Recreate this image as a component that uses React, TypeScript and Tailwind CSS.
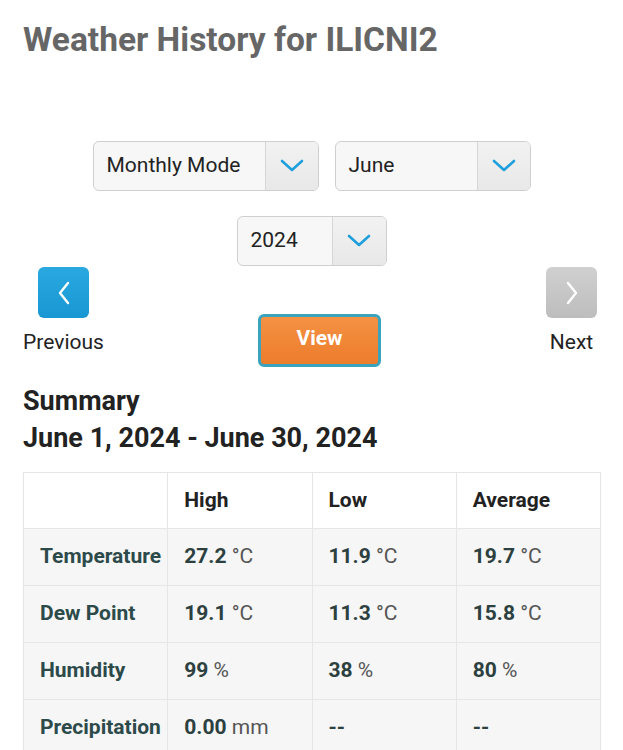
import React from "react";

function Chevron({ dir }: { dir: "down" | "left" | "right" }) {
  if (dir === "down")
    return (
      <svg width="24" height="14" viewBox="0 0 24 14" fill="none">
        <path d="M2 2 L12 11 L22 2" stroke="#1fa0dc" strokeWidth="2.6" strokeLinecap="round" strokeLinejoin="round" />
      </svg>
    );
  const d = dir === "left" ? "M11 2 L3 12 L11 22" : "M3 2 L11 12 L3 22";
  return (
    <svg width="14" height="24" viewBox="0 0 14 24" fill="none">
      <path d={d} stroke="#ffffff" strokeWidth="2.4" strokeLinecap="round" strokeLinejoin="round" />
    </svg>
  );
}

function Select({ label, w, arrowW }: { label: string; w: string; arrowW: string }) {
  return (
    <div className={`${w} h-[50px] flex rounded-[6px] border border-[#cfcfcf] bg-[#f7f7f7] overflow-hidden`}>
      <div className="flex-1 flex items-center pl-[13px] text-[21px] text-[#222]">{label}</div>
      <div className={`${arrowW} flex items-center justify-center border-l border-[#d6d6d6] bg-gradient-to-b from-[#f2f2f2] to-[#e8e8e8]`}>
        <Chevron dir="down" />
      </div>
    </div>
  );
}

const rows = [
  { label: "Temperature", v: [["27.2", "°C"], ["11.9", "°C"], ["19.7", "°C"]] },
  { label: "Dew Point", v: [["19.1", "°C"], ["11.3", "°C"], ["15.8", "°C"]] },
  { label: "Humidity", v: [["99", "%"], ["38", "%"], ["80", "%"]] },
  { label: "Precipitation", v: [["0.00", "mm"], ["--", ""], ["--", ""]] },
];

export default function App() {
  return (
    <div className="w-[623px] h-[750px] overflow-hidden bg-white font-['Roboto',sans-serif]">
      <div className="px-[23px] pt-[20px]">
        <h1 className="text-[33.5px] leading-[40px] font-bold text-[#666666]">Weather History for ILICNI2</h1>
      </div>
      <div className="mt-[81px] flex justify-center gap-[16px]">
        <Select label="Monthly Mode" w="w-[226px]" arrowW="w-[53px]" />
        <Select label="June" w="w-[196px]" arrowW="w-[53px]" />
      </div>
      <div className="mt-[25px] flex justify-center">
        <Select label="2024" w="w-[150px]" arrowW="w-[54px]" />
      </div>
      <div className="flex px-[23px] mt-[1px] h-[104px]">
        <div className="flex flex-col items-center w-[81px]">
          <div className="w-[51px] h-[51px] rounded-[6px] bg-gradient-to-b from-[#2aa8e0] to-[#1897d3] flex items-center justify-center">
            <Chevron dir="left" />
          </div>
          <div className="mt-[12px] text-[21px] leading-[24px] text-[#222]">Previous</div>
        </div>
        <div className="pt-[47px] ml-[154px]">
          <button className="w-[123px] h-[53px] rounded-[6px] border-[3px] border-[#3aa3bd] bg-gradient-to-b from-[#f59143] to-[#ec7d2b] text-white font-bold text-[21px] pb-[4px]">
            View
          </button>
        </div>
        <div className="flex flex-col items-center w-[51px] ml-auto mr-[3px]">
          <div className="w-[51px] h-[51px] rounded-[6px] bg-gradient-to-b from-[#d0d0d0] to-[#bdbdbd] flex items-center justify-center">
            <Chevron dir="right" />
          </div>
          <div className="mt-[12px] text-[21px] leading-[24px] text-[#222]">Next</div>
        </div>
      </div>
      <div className="px-[23px]">
        <div className="mt-[14px] text-[27px] leading-[32px] font-bold text-[#222]">Summary</div>
        <div className="mt-[5px] text-[27px] leading-[32px] font-bold text-[#222]">June 1, 2024 - June 30, 2024</div>
        <table className="mt-[18px] w-[578px] border-collapse table-fixed">
          <thead>
            <tr className="h-[56px] bg-white">
              <th className="border border-[#e6e6e6] w-1/4"></th>
              {["High", "Low", "Average"].map((h) => (
                <th key={h} className="border border-[#e6e6e6] text-left pl-[16px] text-[21px] font-bold text-[#222]">
                  {h}
                </th>
              ))}
            </tr>
          </thead>
          <tbody>
            {rows.map((r) => (
              <tr key={r.label} className="h-[57px] bg-[#f6f6f6]">
                <td className="border border-[#e6e6e6] pl-[16px] pr-0 text-[21px] font-bold text-[#2d4a4a] whitespace-nowrap">{r.label}</td>
                {r.v.map(([n, u], i) => (
                  <td key={i} className="border border-[#e6e6e6] pl-[16px] text-[21px] text-[#2d4040]">
                    <span className="font-bold">{n}</span>
                    {u && <span className="text-[#555]"> {u}</span>}
                  </td>
                ))}
              </tr>
            ))}
          </tbody>
        </table>
      </div>
    </div>
  );
}
